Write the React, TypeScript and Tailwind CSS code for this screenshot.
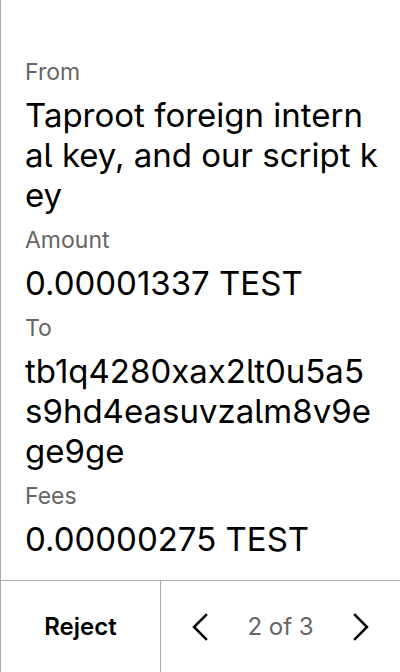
const FIELDS = [
  { label: "From", value: "Taproot foreign internal key, and our script key" },
  { label: "Amount", value: "0.00001337 TEST" },
  { label: "To", value: "tb1q4280xax2lt0u5a5s9hd4easuvzalm8v9ege9ge" },
  { label: "Fees", value: "0.00000275 TEST" },
];

function Chevron({ dir }: { dir: "left" | "right" }) {
  return (
    <svg width="16" height="28" viewBox="0 0 16 28" fill="none">
      <polyline
        points={dir === "left" ? "14,2 2,14 14,26" : "2,2 14,14 2,26"}
        stroke="#000"
        strokeWidth="2.5"
        strokeLinecap="square"
      />
    </svg>
  );
}

export default function App() {
  return (
    <div className="flex h-[672px] w-[400px] flex-col border-l border-[#aaaaaa] bg-white font-['Inter',sans-serif] text-black [font-feature-settings:'cv05']">
      {/* Details */}
      <div className="flex-1 pl-6 pr-[22px] pt-[58px]">
        {FIELDS.map((f, i) => (
          <div key={f.label} className={i > 0 ? "mt-[11px]" : ""}>
            <div className="text-[23px] leading-[28px] text-[#666666]">{f.label}</div>
            <div className="mt-[9px] break-all text-[33px] leading-[40px]">{f.value}</div>
          </div>
        ))}
      </div>

      {/* Footer */}
      <div className="flex h-[92px] border-t border-[#aaaaaa]">
        <button className="flex w-[160px] items-center justify-center border-r border-[#aaaaaa] text-[24px] font-semibold">
          Reject
        </button>
        <div className="flex flex-1 items-center justify-between px-[31px]">
          <Chevron dir="left" />
          <span className="text-[24px] text-[#666666]">2 of 3</span>
          <Chevron dir="right" />
        </div>
      </div>
    </div>
  );
}
